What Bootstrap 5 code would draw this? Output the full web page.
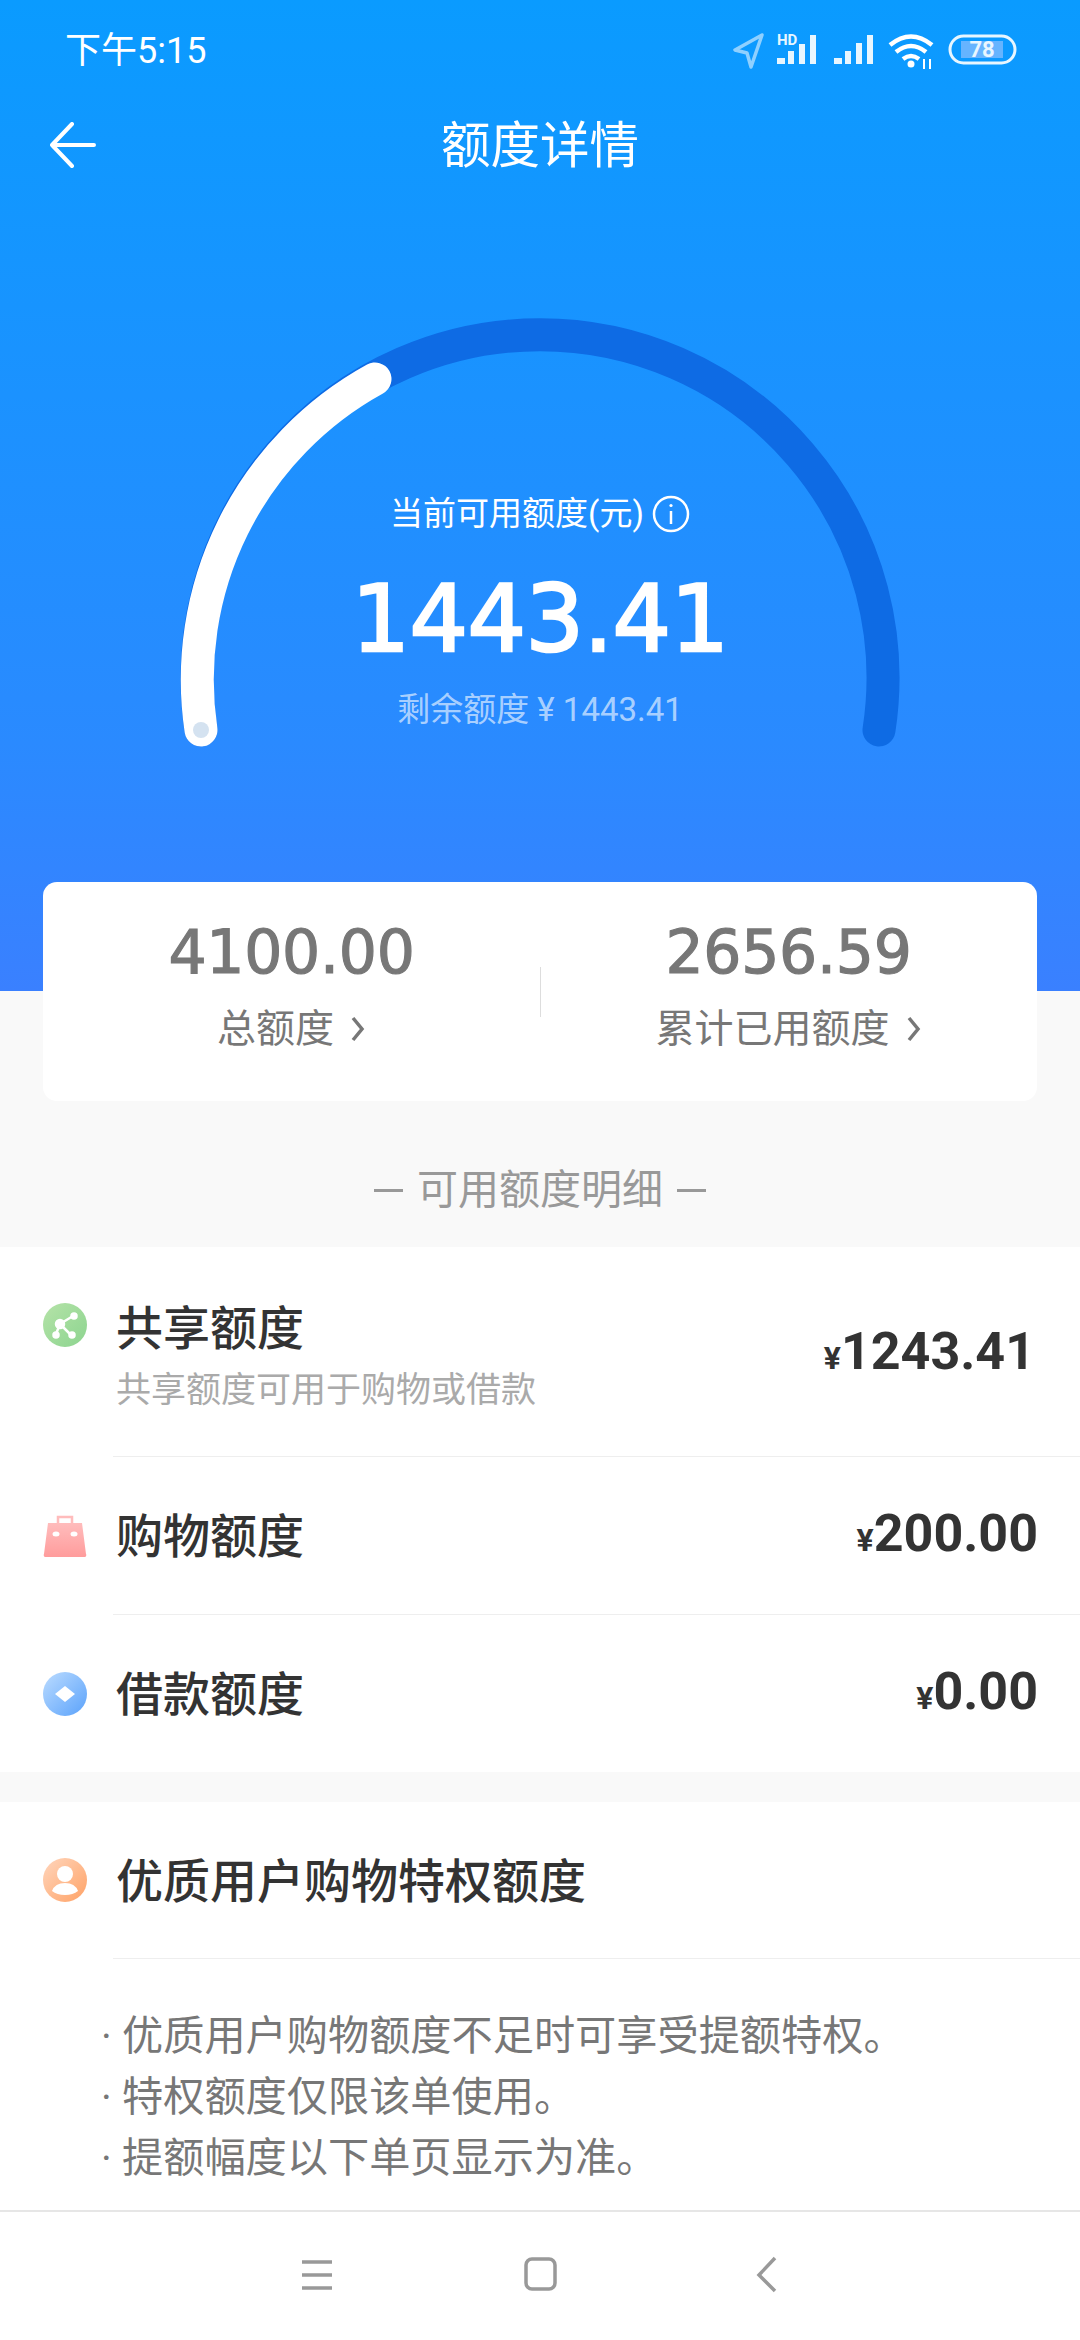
<!DOCTYPE html>
<html lang="zh-CN">
<head>
    <meta charset="UTF-8">
    <meta name="viewport" content="width=device-width, initial-scale=1.0">
    <title>额度详情</title>
    <link href="https://cdn.jsdelivr.net/npm/bootstrap@5.3.0/dist/css/bootstrap.min.css" rel="stylesheet">
    <style>
        html, body { height: 2340px; overflow: hidden; }
        body {
            background-color: #f9f9f9;
            font-family: Roboto, "Noto Sans CJK SC", sans-serif;
            color: #333;
        }
        /* top blue part */
        .hero-area {
            height: 991px;
            background: linear-gradient(180deg, #0a9bff 0%, #2a8aff 75%, #3a80ff 100%);
            color: #fff;
        }
        .status-row { height: 100px; padding: 2px 63px 0 65px; }
        .status-time { font-size: 36px; }
        .title-row { height: 90px; position: relative; padding-top: 3px; }
        .title-row h1 { font-size: 49.5px; font-weight: 400; margin: 0; }
        .back-arrow { position: absolute; left: 50px; top: 22px; }
        .gauge-box { position: relative; height: 801px; padding-top: 301px; }
        .gauge-svg { position: absolute; left: 0; top: 0; }
        .gauge-label { position: relative; font-size: 33px; line-height: 46px; }
        .gauge-value {
            position: relative;
            font-family: "DejaVu Sans", sans-serif;
            font-size: 92px;
            line-height: 110px;
            letter-spacing: -.5px;
            -webkit-text-stroke: 2.5px #fff;
            margin-top: 28px;
        }
        .gauge-rest { position: relative; font-size: 33px; line-height: 46px; color: rgba(255, 255, 255, .62); margin-top: 12px; }
        /* summary card */
        .summary-card {
            height: 219px;
            margin: -109px 43px 0;
            border: 0;
            border-radius: 14px;
            color: #777;
        }
        .summary-split { width: 1px; height: 50px; background: #ddd; position: absolute; left: 497px; top: 85px; }
        .summary-num {
            font-family: "DejaVu Sans", sans-serif;
            font-size: 60px;
            line-height: 70px;
            letter-spacing: -.3px;
            -webkit-text-stroke: 1.2px #777;
            margin-top: 35px;
        }
        .summary-label { font-size: 39px; line-height: 50px; margin-top: 17px; }
        /* lists */
        .detail-head { height: 146px; padding-top: 33px; font-size: 41px; color: #999; gap: 14px; }
        .dash-line { width: 29px; height: 3px; background: #999; }
        .white-block { background: #fff; }
        .privilege-block { margin-top: 30px; }
        .credit-row { padding-left: 43px; padding-right: 42px; }
        .row-tall { height: 209px; padding-right: 45px; }
        .row-mid { height: 157px; }
        .row-last { height: 156px; }
        .row-icon { width: 44px; height: 44px; flex: none; margin-right: 29px; }
        .share-icon { margin-top: 56px; }
        .row-name { font-size: 47px; font-weight: 500; line-height: 60px; color: #333; padding-top: 3px; box-sizing: content-box; }
        .share-name { margin-top: 49px; }
        .row-sub { font-size: 35px; line-height: 44px; color: #aaa; margin-top: 10px; }
        .row-amount { font-size: 52px; font-weight: 700; color: #333; line-height: 60px; padding-top: 2px; }
        .row-amount small { font-size: 32px; font-weight: 700; }
        .tall-amount { padding-top: 6px; }
        .hair-line { height: 1px; background: #eee; margin-left: 113px; }
        .notes-box { height: 251px; padding: 47px 0 0 101px; font-size: 41.2px; line-height: 61px; color: #777; }
        .notes-box span { display: inline-block; width: 21px; }
        .soft-nav { height: 130px; background: #fff; border-top: 2px solid #e6e6e6; }
    </style>
</head>
<body>
    <!-- Blue header with gauge -->
    <div class="hero-area">
        <div class="status-row d-flex justify-content-between align-items-center">
            <div class="status-time">下午5:15</div>
            <div class="d-flex align-items-center">
                <svg width="284" height="40" viewBox="0 0 284 40">
                    <path d="M29 4 2 19l12 3 4 14z" fill="none" stroke="#8fd0ff" stroke-width="3.5" stroke-linejoin="round"/>
                    <text x="44" y="14" font-family="Roboto" font-size="15" font-weight="700" fill="#e8f6ff">HD</text>
                    <g fill="#e8f6ff">
                        <rect x="44" y="27" width="8" height="6"/>
                        <rect x="55" y="20" width="6" height="13"/>
                        <rect x="66" y="13" width="6" height="20"/>
                        <rect x="77" y="4" width="6" height="29"/>
                        <rect x="101" y="27" width="8" height="6"/>
                        <rect x="112" y="20" width="6" height="13"/>
                        <rect x="123" y="12" width="6" height="21"/>
                        <rect x="134" y="4" width="6" height="29"/>
                    </g>
                    <g fill="none" stroke="#fff" stroke-width="4.5">
                        <path d="M157 14q21-17 42 0"/>
                        <path d="M163 21q15-12 30 0"/>
                        <path d="M170 28q8-6 16 0"/>
                    </g>
                    <circle cx="178" cy="33" r="3.5" fill="#fff"/>
                    <path d="M191 28v10M197 28v10" stroke="#fff" stroke-width="2"/>
                    <rect x="217" y="5" width="65" height="27" rx="13.5" fill="none" stroke="#e8f6ff" stroke-width="3"/>
                    <rect x="228" y="10" width="42" height="17" fill="#66b4ff"/>
                    <text x="249" y="26" text-anchor="middle" font-family="Roboto" font-size="22" font-weight="700" fill="#e8f6ff">78</text>
                </svg>
            </div>
        </div>
        <div class="title-row d-flex justify-content-center align-items-center">
            <svg class="back-arrow" width="46" height="46" viewBox="0 0 46 46" fill="none" stroke="#fff" stroke-width="4" stroke-linecap="round" stroke-linejoin="round">
                <path d="M22 2 2 23l20 21M2 23h42"/>
            </svg>
            <h1>额度详情</h1>
        </div>
        <div class="gauge-box text-center">
            <svg class="gauge-svg" width="1080" height="600" viewBox="0 0 1080 600" fill="none" stroke-linecap="round" stroke-width="33">
                <path d="M201 540A343 343 0 1 1 879 540" stroke="#0e6be4"/>
                <path d="M201 540A343 343 0 0 1 375 189" stroke="#fff"/>
                <ellipse cx="201" cy="540" rx="8" ry="8" fill="#d4e2f0" stroke="none"/>
            </svg>
            <div class="gauge-label d-flex justify-content-center align-items-center gap-2">
                <span>当前可用额度(元)</span>
                <svg width="38" height="38" viewBox="0 0 38 38" fill="none" stroke="#fff" stroke-width="2.5">
                    <circle cx="19" cy="19" r="17"/>
                    <path d="M19 16v13"/>
                    <circle cx="19" cy="10.5" r="1.6" fill="#fff" stroke="none"/>
                </svg>
            </div>
            <div class="gauge-value">1443.41</div>
            <div class="gauge-rest">剩余额度 ¥ 1443.41</div>
        </div>
    </div>

    <!-- Total / used card -->
    <div class="card summary-card">
        <div class="summary-split"></div>
        <div class="row g-0 text-center">
            <div class="col-6">
                <div class="summary-num">4100.00</div>
                <div class="summary-label d-flex justify-content-center align-items-center gap-3">
                    <span>总额度</span>
                    <svg width="16" height="28" viewBox="0 0 16 28" fill="none" stroke="#777" stroke-width="3.5"><path d="M3 3l9 11-9 11"/></svg>
                </div>
            </div>
            <div class="col-6">
                <div class="summary-num">2656.59</div>
                <div class="summary-label d-flex justify-content-center align-items-center gap-3">
                    <span>累计已用额度</span>
                    <svg width="16" height="28" viewBox="0 0 16 28" fill="none" stroke="#777" stroke-width="3.5"><path d="M3 3l9 11-9 11"/></svg>
                </div>
            </div>
        </div>
    </div>

    <div class="detail-head d-flex justify-content-center align-items-center">
        <div class="dash-line"></div>
        <div>可用额度明细</div>
        <div class="dash-line"></div>
    </div>

    <!-- Credit breakdown -->
    <div class="white-block">
        <div class="credit-row row-tall d-flex justify-content-between">
            <div class="d-flex align-items-start">
                <svg class="row-icon share-icon" viewBox="0 0 44 44">
                    <defs><linearGradient id="gGreen" x1="0" y1="0" x2="1" y2="1"><stop offset="0" stop-color="#b5e3a8"/><stop offset="1" stop-color="#8cd48f"/></linearGradient></defs>
                    <circle cx="22" cy="22" r="22" fill="url(#gGreen)"/>
                    <g fill="#fff" stroke="#fff" stroke-width="2.5">
                        <path d="M17 21 30 13M17 21l11 11M17 21 13 31" fill="none"/>
                        <circle cx="17" cy="21" r="4"/><circle cx="31" cy="13" r="2.5"/><circle cx="29" cy="32" r="2.5"/><circle cx="13" cy="32" r="2.5"/>
                    </g>
                </svg>
                <div>
                    <div class="row-name share-name">共享额度</div>
                    <div class="row-sub">共享额度可用于购物或借款</div>
                </div>
            </div>
            <div class="row-amount tall-amount align-self-center">
                <small>¥</small>1243.41
            </div>
        </div>
        <div class="hair-line"></div>
        <div class="credit-row row-mid d-flex justify-content-between align-items-center">
            <div class="d-flex align-items-center">
                <svg class="row-icon" viewBox="0 0 44 44">
                    <defs><linearGradient id="gPink" x1="0" y1="0" x2="0" y2="1"><stop offset="0" stop-color="#ffbcbc"/><stop offset="1" stop-color="#ff9c9c"/></linearGradient></defs>
                    <path d="M15 10V3h14v7" fill="none" stroke="#ffbcbc" stroke-width="2.5"/>
                    <path d="M5 9h34l4 31a2 2 0 0 1-2 3H3a2 2 0 0 1-2-3z" fill="url(#gPink)"/>
                    <ellipse cx="13" cy="20" rx="3.5" ry="2.5" fill="#fff"/><ellipse cx="31" cy="20" rx="3.5" ry="2.5" fill="#fff"/>
                </svg>
                <div class="row-name">购物额度</div>
            </div>
            <div class="row-amount"><small>¥</small>200.00</div>
        </div>
        <div class="hair-line"></div>
        <div class="credit-row row-mid d-flex justify-content-between align-items-center">
            <div class="d-flex align-items-center">
                <svg class="row-icon" viewBox="0 0 44 44">
                    <defs><linearGradient id="gBlue" x1="0" y1="0" x2="1" y2="1"><stop offset="0" stop-color="#bcdcff"/><stop offset="1" stop-color="#5aa2fb"/></linearGradient></defs>
                    <circle cx="22" cy="22" r="22" fill="url(#gBlue)"/>
                    <path d="M22 14l10 8-10 8-10-8z" fill="#fff"/>
                </svg>
                <div class="row-name">借款额度</div>
            </div>
            <div class="row-amount"><small>¥</small>0.00</div>
        </div>
    </div>

    <!-- Privilege notes -->
    <div class="white-block privilege-block">
        <div class="credit-row row-last d-flex align-items-center">
            <svg class="row-icon" viewBox="0 0 44 44">
                <defs><linearGradient id="gOrange" x1="0" y1="0" x2="1" y2="1"><stop offset="0" stop-color="#ffd6bd"/><stop offset="1" stop-color="#ffa266"/></linearGradient></defs>
                <circle cx="22" cy="22" r="22" fill="url(#gOrange)"/>
                <circle cx="22" cy="16" r="8" fill="#fff"/>
                <path d="M9 33q3-8 13-8t13 8q-5 4-13 4t-13-4z" fill="#fff"/>
            </svg>
            <div class="row-name">优质用户购物特权额度</div>
        </div>
        <div class="hair-line"></div>
        <div class="notes-box">
            <div><span>·</span>优质用户购物额度不足时可享受提额特权。</div>
            <div><span>·</span>特权额度仅限该单使用。</div>
            <div><span>·</span>提额幅度以下单页显示为准。</div>
        </div>
    </div>

    <!-- Android nav bar -->
    <div class="soft-nav position-relative">
        <svg class="position-absolute top-0 start-0" width="1080" height="128" viewBox="0 0 1080 128" fill="none" stroke="#999">
            <path d="M302 50h30M302 63h30M302 76h30" stroke-width="3.5"/>
            <rect x="526" y="47" width="29" height="30" rx="6" stroke-width="3.5"/>
            <path d="M775 46 759 63l16 16" stroke-width="3.5"/>
        </svg>
    </div>
    <script src="https://cdn.jsdelivr.net/npm/bootstrap@5.3.0/dist/js/bootstrap.bundle.min.js"></script>
</body>
</html>
